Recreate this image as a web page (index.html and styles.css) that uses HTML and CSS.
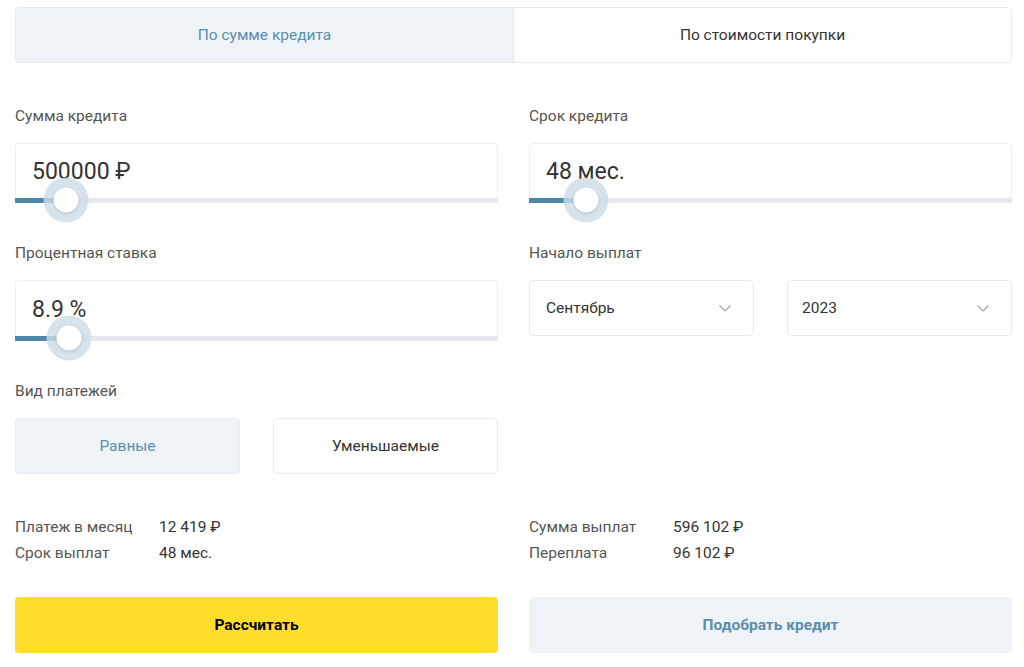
FILE: index.html
```html
<!DOCTYPE html>
<html lang="ru">
<head>
<meta charset="utf-8">
<title>Кредитный калькулятор</title>
<link rel="stylesheet" href="styles.css">
</head>
<body>
<div class="page">
  <div class="tabs">
    <div class="tab tab-active">По сумме кредита</div>
    <div class="tab">По стоимости покупки</div>
  </div>

  <div class="form">
    <div class="col">
      <div class="field">
        <div class="label">Сумма кредита</div>
        <div class="box">
          <div class="value">500000 ₽</div>
          <div class="track"><div class="fill" style="width:51px"></div><span class="thumb" style="left:51px"></span></div>
        </div>
      </div>
      <div class="field">
        <div class="label">Процентная ставка</div>
        <div class="box box-tall">
          <div class="value">8.9 %</div>
          <div class="track"><div class="fill" style="width:54px"></div><span class="thumb" style="left:54px"></span></div>
        </div>
      </div>
      <div class="field">
        <div class="label">Вид платежей</div>
        <div class="pair">
          <div class="opt opt-active">Равные</div>
          <div class="opt">Уменьшаемые</div>
        </div>
      </div>
    </div>
    <div class="col">
      <div class="field">
        <div class="label">Срок кредита</div>
        <div class="box">
          <div class="value">48 мес.</div>
          <div class="track"><div class="fill" style="width:57px"></div><span class="thumb" style="left:57px"></span></div>
        </div>
      </div>
      <div class="field">
        <div class="label">Начало выплат</div>
        <div class="pair">
          <div class="select"><span>Сентябрь</span><svg class="chev" width="12" height="7" viewBox="0 0 12 7"><path d="M0.5 0.5 L6 6 L11.5 0.5" fill="none" stroke="#9aa3ab" stroke-width="1.2"/></svg></div>
          <div class="select select-narrow"><span>2023</span><svg class="chev" width="12" height="7" viewBox="0 0 12 7"><path d="M0.5 0.5 L6 6 L11.5 0.5" fill="none" stroke="#9aa3ab" stroke-width="1.2"/></svg></div>
        </div>
      </div>
    </div>
  </div>

  <div class="results">
    <div class="res">
      <span class="rl">Платеж в месяц</span><span class="rv">12 419 ₽</span>
      <span class="rl">Срок выплат</span><span class="rv">48 мес.</span>
    </div>
    <div class="res">
      <span class="rl">Сумма выплат</span><span class="rv">596 102 ₽</span>
      <span class="rl">Переплата</span><span class="rv">96 102 ₽</span>
    </div>
  </div>

  <div class="actions">
    <div class="btn btn-yellow">Рассчитать</div>
    <div class="btn btn-light">Подобрать кредит</div>
  </div>
</div>
</body>
</html>
```

FILE: styles.css
```css
* { box-sizing: border-box; }
html, body { margin: 0; padding: 0; background: #fff; }
body {
  font-family: Roboto, "Liberation Sans", Arial, sans-serif;
  color: #333;
}
.page {
  width: 997px;
  margin-left: 15px;
  padding-top: 7px;
}
.tabs {
  display: flex;
  height: 56px;
  border: 1px solid #e6ebef;
  border-radius: 4px;
  overflow: hidden;
}
.tab {
  flex: 1;
  display: flex;
  align-items: center;
  justify-content: center;
  font-size: 15.5px;
  color: #333;
  background: #fff;
}
.tab-active {
  background: #eef3f7;
  color: #5b8eaf;
  border-right: 1px solid #e3e9ee;
}
.form {
  display: grid;
  grid-template-columns: 483px 483px;
  column-gap: 31px;
  margin-top: 43px;
}
.col {
  display: flex;
  flex-direction: column;
  gap: 40px;
}
.label {
  font-size: 15.5px;
  line-height: 20px;
  color: #555;
  margin-bottom: 17px;
}
.box {
  height: 60px;
  border: 1px solid #eef1f4;
  border-bottom: none;
  border-radius: 4px 4px 0 0;
  display: flex;
  flex-direction: column;
}
.box-tall { height: 61px; }
.value {
  flex: 1;
  display: flex;
  align-items: center;
  padding-left: 16px;
  padding-top: 1px;
  font-size: 23px;
  color: #333;
}
.track {
  position: relative;
  height: 5px;
  margin: 0 -1px;
  background: #e6eaee;
}
.fill {
  height: 5px;
  background: #4e87a8;
}
.thumb {
  position: absolute;
  top: 2px;
  width: 25px;
  height: 25px;
  border-radius: 50%;
  background: #fff;
  transform: translate(-50%, -50%);
  box-shadow: 0 1px 3px rgba(0,0,0,0.18), 0 0 0 10px rgba(205,220,231,0.8);
}
.pair {
  display: grid;
  grid-template-columns: 225px 225px;
  column-gap: 33px;
}
.opt {
  height: 56px;
  display: flex;
  align-items: center;
  justify-content: center;
  font-size: 15.5px;
  color: #333;
  border: 1px solid #e8ecef;
  border-radius: 4px;
  background: #fff;
}
.opt-active {
  background: #eef3f7;
  border-color: #e6ecf1;
  color: #5b8eaf;
}
.select {
  height: 56px;
  display: flex;
  align-items: center;
  justify-content: space-between;
  padding: 0 22px 0 16px;
  border: 1px solid #e8ecef;
  border-radius: 4px;
  font-size: 15.5px;
  color: #333;
}
.select-narrow { padding-left: 14px; }
.chev { display: block; }
.results {
  display: grid;
  grid-template-columns: 483px 483px;
  column-gap: 31px;
  margin-top: 40px;
}
.res {
  display: grid;
  grid-template-columns: 144px auto;
  font-size: 15.5px;
  line-height: 26px;
}
.rl { color: #555; }
.rv { color: #333; }
.actions {
  display: grid;
  grid-template-columns: 483px 483px;
  column-gap: 31px;
  margin-top: 31px;
}
.btn {
  height: 56px;
  display: flex;
  align-items: center;
  justify-content: center;
  font-size: 15.5px;
  font-weight: 700;
  border-radius: 4px;
}
.btn-yellow { background: #ffdd2d; color: #000; }
.btn-light { background: #eef3f7; color: #5b8eaf; }
```
